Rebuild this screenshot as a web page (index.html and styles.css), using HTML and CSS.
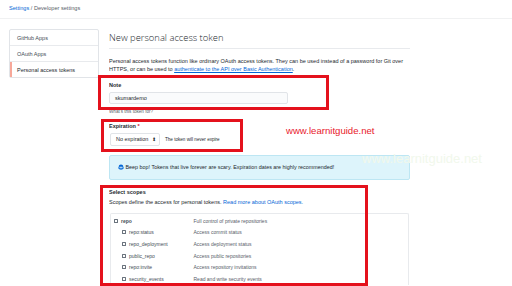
FILE: index.html
```html
<!DOCTYPE html>
<html>
<head>
<meta charset="utf-8">
<link rel="stylesheet" href="styles.css">
</head>
<body>
<div class="breadcrumb"><a class="crumb-link">Settings</a> / Developer settings</div>
<div class="layout">
  <nav class="sidebar">
    <div class="side-item">GitHub Apps</div>
    <div class="side-item">OAuth Apps</div>
    <div class="side-item selected">Personal access tokens</div>
  </nav>
  <main class="main">
    <h1 class="title">New personal access token</h1>
    <p class="intro">Personal access tokens function like ordinary OAuth access tokens. They can be used instead of a password for Git over HTTPS, or can be used to <a class="link">authenticate to the API over Basic Authentication</a>.</p>

    <div class="field note-field">
      <div class="label">Note</div>
      <div class="input">skumardemo</div>
      <div class="hint">What’s this token for?</div>
    </div>

    <div class="field exp-field">
      <div class="label">Expiration <span class="req">*</span></div>
      <div class="exp-row">
        <div class="select">No expiration <span class="arrows">⬍</span></div>
        <span class="exp-note">The token will never expire</span>
      </div>
    </div>

    <div class="flash">
      <svg class="bot" viewBox="0 0 16 16" width="6" height="6"><path fill="#0366d6" d="M8 1C4.5 1 2 3.5 2 6.5V8c-.6.3-1 .9-1 1.6V11c0 .8.7 1.5 1.5 1.5H3c.6 1.5 2.6 2.5 5 2.5s4.4-1 5-2.5h.5c.8 0 1.5-.7 1.5-1.5V9.6c0-.7-.4-1.300-1-1.6V6.5C14 3.5 11.5 1 8 1zm-3 6h6c.6 0 1 .4 1 1v2c0 .6-.4 1-1 1H5c-.6 0-1-.4-1-1V8c0-.6.4-1 1-1zm1 1.5a.8.8 0 100 1.6.8.8 0 000-1.6zm4 0a.8.8 0 100 1.6.8.8 0 000-1.6z"/></svg>
      <span>Beep bop! Tokens that live forever are scary. Expiration dates are highly recommended!</span>
    </div>

    <div class="scopes">
      <div class="label">Select scopes</div>
      <div class="scopes-desc">Scopes define the access for personal tokens. <a class="link plain">Read more about OAuth scopes.</a></div>
      <div class="scope-table">
        <div class="scope-row parent"><span class="cb"></span><span class="scope-name">repo</span><span class="scope-desc">Full control of private repositories</span></div>
        <div class="scope-row child"><span class="cb"></span><span class="scope-name">repo:status</span><span class="scope-desc">Access commit status</span></div>
        <div class="scope-row child"><span class="cb"></span><span class="scope-name">repo_deployment</span><span class="scope-desc">Access deployment status</span></div>
        <div class="scope-row child"><span class="cb"></span><span class="scope-name">public_repo</span><span class="scope-desc">Access public repositories</span></div>
        <div class="scope-row child"><span class="cb"></span><span class="scope-name">repo:invite</span><span class="scope-desc">Access repository invitations</span></div>
        <div class="scope-row child"><span class="cb"></span><span class="scope-name">security_events</span><span class="scope-desc">Read and write security events</span></div>
      </div>
    </div>
  </main>
</div>

<div class="annot annot-note"></div>
<div class="annot annot-exp"></div>
<div class="annot annot-scopes"></div>
<div class="wm wm-red">www.learnitguide.net</div>
<div class="wm wm-faint">www.learnitguide.net</div>
</body>
</html>
```
FILE: styles.css
```css
* { box-sizing: border-box; }
html, body { margin: 0; padding: 0; background: #fff; }
body {
  width: 512px;
  height: 286px;
  overflow: hidden;
  position: relative;
  font-family: "Liberation Sans", Arial, sans-serif;
  color: #24292e;
}
.breadcrumb {
  height: 19px;
  padding-left: 9px;
  padding-top: 4px;
  font-size: 5.6px;
  line-height: 8px;
  color: #586069;
  border-bottom: 1px solid #f0f1f2;
}
.crumb-link { color: #0366d6; }
.layout {
  display: flex;
  padding-top: 10px;
  padding-left: 9px;
}
.sidebar {
  width: 90px;
  height: 49px;
  border: 1px solid #e1e4e8;
  border-radius: 2px;
  flex: none;
}
.side-item {
  height: 16px;
  line-height: 16px;
  padding-left: 7px;
  font-size: 5.5px;
  color: #444d56;
  border-bottom: 1px solid #e8eaed;
}
.side-item:last-child { border-bottom: none; height: 15px; }
.side-item.selected {
  border-left: 2px solid #f7a89a;
  padding-left: 5px;
  color: #24292e;
}
.main {
  margin-left: 10px;
  width: 301px;
  height: 256px;
  flex: none;
  overflow: hidden;
}
.title {
  margin: 0;
  padding-top: 3px;
  padding-bottom: 4px;
  font-family: "Open Sans", "Liberation Sans", sans-serif;
  font-size: 9.4px;
  line-height: 12px;
  font-weight: 300;
  color: #24292e;
  border-bottom: 1px solid #e8eaed;
}
.intro {
  margin: 8px 0 0;
  font-size: 5.5px;
  line-height: 8.4px;
  color: #24292e;
}
.link { color: #0366d6; text-decoration: underline; }
.link.plain { text-decoration: none; }
.label {
  font-size: 5.5px;
  line-height: 8px;
  font-weight: bold;
  color: #24292e;
}
.req { color: #cb2431; }
.note-field { margin-top: 7px; }
.input {
  margin-top: 2.7px;
  width: 179px;
  height: 12.3px;
  border: 1px solid #e1e4e8;
  border-radius: 2px;
  background: #fafbfc;
  font-size: 5.5px;
  line-height: 10.3px;
  padding-left: 5px;
}
.hint {
  margin-top: 5.5px;
  font-size: 4.6px;
  line-height: 6px;
  color: #586069;
}
.exp-field { margin-top: 6.3px; }
.exp-row {
  margin-top: 3px;
  display: flex;
  align-items: center;
  gap: 5px;
}
.select {
  width: 50px;
  height: 13px;
  margin-left: 1px;
  border: 1px solid #e1e4e8;
  border-radius: 2px;
  background: #fff;
  font-size: 5.5px;
  line-height: 11px;
  padding-left: 5px;
  color: #24292e;
}
.arrows { font-size: 5px; margin-left: 2px; }
.exp-note {
  font-size: 4.6px;
  color: #24292e;
}
.flash {
  margin-top: 9px;
  width: 301px;
  height: 25.7px;
  margin-left: -0.5px;
  background: #ddf4fb;
  border: 1px solid #bde6f3;
  border-radius: 2px;
  display: flex;
  align-items: center;
  padding-left: 8px;
  gap: 2px;
  font-size: 5.4px;
  color: #24292e;
}
.bot { flex: none; }
.scopes { margin-top: 7.3px; }
.scopes-desc {
  margin-top: 2px;
  font-size: 5.5px;
  line-height: 8px;
  color: #24292e;
}
.scope-table {
  margin-top: 7px;
  margin-left: 1px;
  width: 299px;
  height: 80px;
  border: 1px solid #e8eaed;
  border-bottom: none;
  border-radius: 2px 2px 0 0;
  padding-top: 1.5px;
  overflow: hidden;
}
.scope-row {
  height: 11.6px;
  display: flex;
  align-items: center;
  font-size: 5px;
  color: #24292e;
}
.cb {
  width: 4px;
  height: 4px;
  border: 0.6px solid #6a737d;
  border-radius: 0.6px;
  flex: none;
}
.parent { padding-left: 3px; }
.parent .scope-name { width: 72.5px; margin-left: 3px; font-weight: bold; color: #444d56; }
.child { padding-left: 11px; }
.child .scope-name { width: 64.5px; margin-left: 3px; color: #444d56; }
.scope-desc { color: #586069; }
.annot {
  position: absolute;
  border: 3px solid #e4111c;
}
.annot-note { left: 98px; top: 75px; width: 231px; height: 35px; }
.annot-exp { left: 101px; top: 119px; width: 142px; height: 33px; }
.annot-scopes { left: 100px; top: 185px; width: 268px; height: 101px; }
.wm {
  position: absolute;
  white-space: nowrap;
  font-family: "Liberation Sans", Arial, sans-serif;
}
.wm-red { left: 286px; top: 125px; font-size: 9.6px; line-height: 12px; color: #e8192c; }
.wm-faint { left: 362px; top: 151px; font-size: 13px; line-height: 16px; color: #f1f8ec; }
```
